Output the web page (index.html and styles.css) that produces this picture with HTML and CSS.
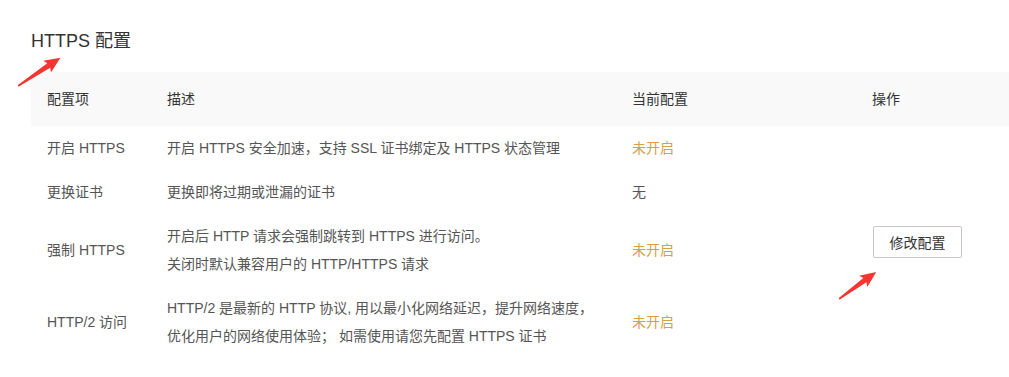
FILE: index.html
```html
<!DOCTYPE html>
<html lang="zh-CN">
<head>
  <meta charset="UTF-8">
  <title>HTTPS 配置</title>
  <link rel="stylesheet" href="styles.css">
</head>
<body>

<div class="page">
  <h2 class="title">HTTPS 配置</h2>

  <div class="config-table">
    <div class="cell head">配置项</div>
    <div class="cell head">描述</div>
    <div class="cell head">当前配置</div>
    <div class="cell head">操作</div>

    <div class="cell">开启 HTTPS</div>
    <div class="cell">开启 HTTPS 安全加速，支持 SSL 证书绑定及 HTTPS 状态管理</div>
    <div class="cell off">未开启</div>
    <div class="cell action">
      <button class="btn">修改配置</button>
    </div>

    <div class="cell">更换证书</div>
    <div class="cell">更换即将过期或泄漏的证书</div>
    <div class="cell">无</div>

    <div class="cell">强制 HTTPS</div>
    <div class="cell">开启后 HTTP 请求会强制跳转到 HTTPS 进行访问。<br>关闭时默认兼容用户的 HTTP/HTTPS 请求</div>
    <div class="cell off">未开启</div>

    <div class="cell">HTTP/2 访问</div>
    <div class="cell">HTTP/2 是最新的 HTTP 协议, 用以最小化网络延迟，提升网络速度，<br>优化用户的网络使用体验； 如需使用请您先配置 HTTPS 证书</div>
    <div class="cell off">未开启</div>
  </div>
</div>

<!-- annotation arrows -->
<svg class="arrow arrow-title" width="51" height="16" viewBox="0 0 51 16">
  <polygon points="0,7.2 37,5.4 35,1 51,8 35,15 37,10.6 0,8.8" fill="#f43530"/>
</svg>
<svg class="arrow arrow-btn" width="46" height="16" viewBox="0 0 46 16">
  <polygon points="0,7.2 32,5.4 30,1 46,8 30,15 32,10.6 0,8.8" fill="#f43530"/>
</svg>

</body>
</html>
```

FILE: styles.css
```css
body {
  margin: 0;
  position: relative;
  background: #fff;
  font-family: 'Liberation Sans', 'Noto Sans CJK SC', sans-serif;
  color: #555;
}

.page {
  padding: 24px 0 0 31px;
}

.title {
  margin: 0 0 14px;
  font-size: 18px;
  font-weight: normal;
  line-height: 34px;
  color: #333;
}

.config-table {
  display: grid;
  grid-template-columns: 120px 465px 240px 1fr;
  font-size: 14px;
}

.cell {
  padding: 8px 16px;
  line-height: 28px;
  display: flex;
  flex-direction: column;
  justify-content: center;
}

.head {
  background: #f9f9f9;
  padding: 13px 16px;
  color: #333;
}

.off {
  color: #d4a04c;
}

.action {
  grid-column: 4;
  grid-row: 2 / span 4;
  justify-content: center;
  padding-left: 17px;
}

.btn {
  width: 89px;
  height: 32px;
  border: 1px solid #c8c8c8;
  border-radius: 2px;
  background: #fff;
  color: #333;
  font-family: inherit;
  font-size: 14px;
  padding: 0;
  cursor: pointer;
}

.arrow {
  position: absolute;
  transform-origin: 0 50%;
}

.arrow-title {
  left: 18px;
  top: 78px;
  transform: rotate(-33.7deg);
}

.arrow-btn {
  left: 839px;
  top: 291px;
  transform: rotate(-36deg);
}
```
